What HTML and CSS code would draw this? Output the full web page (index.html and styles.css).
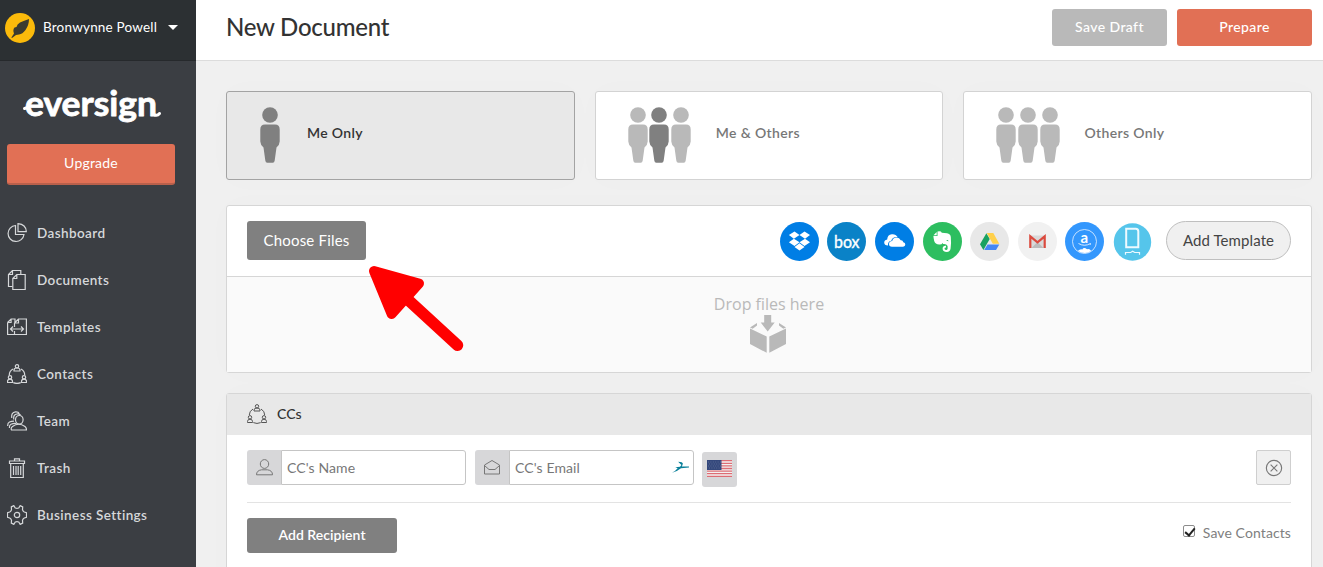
FILE: index.html
```html
<!DOCTYPE html>
<html lang="en">
<head>
  <meta charset="UTF-8">
  <title>New Document - eversign</title>
  <meta name="viewport" content="width=device-width, initial-scale=1.0">
  <link rel="stylesheet" href="styles.css">
</head>
<body>
  <svg class="defs" width="0" height="0">
    <symbol id="person" viewBox="0 0 20 56">
      <circle cx="10" cy="8" r="7.8"/>
      <path d="M5 17.6h10q4.7 0 4.7 5v12q0 3-3.2 6l-1.800 13q-.3 2.200-2 2.200H7.300q-1.700 0-2-2.200l-1.800-13q-3.200-3-3.200-6v-12q0-5 4.700-5z"/>
    </symbol>
    <symbol id="contacts" viewBox="0 0 20 20">
      <circle cx="10" cy="2.300" r="1.700"/>
      <path d="M7 7V6q0-2 3-2t3 2v1z"/>
      <circle cx="3" cy="13.300" r="1.700"/>
      <path d="M.5 18.500v-1q0-2.300 2.500-2.300t2.500 2.300v1z"/>
      <circle cx="17" cy="13.300" r="1.700"/>
      <path d="M14.500 18.500v-1q0-2.300 2.500-2.300t2.500 2.300v1z"/>
      <path d="M6 5Q2.300 7 2.300 11M14 5q3.700 2 3.700 6M6.300 18.600q3.700 1.700 7.400 0"/>
    </symbol>
  </svg>

  <aside class="sidebar">
    <div class="user">
      <svg class="avatar" viewBox="0 0 30 30">
        <circle cx="15" cy="15" r="15" fill="#fbba0b"/>
        <path d="M24 6q0 6-3.500 11-3 4-6.500 4.500l-3 .5L7 25l-.6-.6L9 20.500Q7.500 17 9.500 14.500l2-.5Q12 11 15 9.500 19 7.500 24 6z" fill="#3b3b30"/>
      </svg>
      <span class="user-name">Bronwynne Powell</span>
      <span class="caret"></span>
    </div>

    <svg class="logo" viewBox="0 0 140 54">
      <text x="3" y="35" textLength="132" lengthAdjust="spacingAndGlyphs">eversign</text>
      <path d="M2.500 27.500L6 26.500M133 34q2.500 1 4.500-1.500"/>
    </svg>
    <a class="upgrade">Upgrade</a>

    <nav class="nav">
      <a class="nav-item">
        <svg viewBox="0 0 20 20"><path d="M8.500 2.500a8 8 0 1 0 8.500 9H8.500z"/><path d="M11 .6v8h8.300Q19 1.200 11 .6z"/></svg>
        Dashboard
      </a>
      <a class="nav-item">
        <svg viewBox="0 0 20 20"><path d="M5.500 16.500h-4v-12l4-4h8.300v3.700M1.500 4.500h4v-4"/><path d="M5.800 8.500l4-4h8.400v15H5.800zM5.800 8.500h4v-4"/></svg>
        Documents
      </a>
      <a class="nav-item">
        <svg viewBox="0 0 20 20"><path d="M.6 5.500l3.500-3.500H8v3M.6 5.500h3.500V2M.6 5.500v12h18.800V2h-8L7.500 6v4M7.500 6h4V2M7.500 14v3.500"/><path d="M3.500 12h13M6 9.500L3.500 12 6 14.500M14 9.500l2.500 2.500-2.500 2.500"/></svg>
        Templates
      </a>
      <a class="nav-item">
        <svg viewBox="0 0 20 20"><use href="#contacts"/></svg>
        Contacts
      </a>
      <a class="nav-item">
        <svg viewBox="0 0 20 20"><ellipse cx="12.300" cy="8.800" rx="3.800" ry="4.300"/><path d="M4.500 19q-1-2 1-3.500 6-4.500 12.500 0 1.500 1 1.500 3.500z"/><path d="M6.800 8.500Q6 3.500 10 3q2.500-.2 3.500 1.200M4.800 7Q4 1.300 8.500.8q3-.2 3.700 1.800M2.500 17Q2 14.500 4 13.300q3-1.500 5.500-.8M.7 15Q.5 12 2.500 11q2-.9 4.500-.9"/></svg>
        Team
      </a>
      <a class="nav-item">
        <svg viewBox="0 0 20 20"><path d="M2.500 5.500V3h15v2.500zM3.700 5.500v14h12.600v-14M7.500 3V.8h5V3M6.500 8v9M9 8v9M11.200 8v9M13.700 8v9"/></svg>
        Trash
      </a>
      <a class="nav-item">
        <svg viewBox="0 0 20 20"><circle cx="10" cy="10" r="2.700"/><path d="M4.300 1.900L6.800.6l1.500 2.400q1.700.7 3.400 0l1.500-2.400 2.500 1.300-.2 2.800q.5 1.500 1.800 2.300l2.200.8v4.400l-2.200.8q-1.300.8-1.800 2.300l.2 2.800-2.500 1.300-1.500-2.400q-1.700-.7-3.400 0l-1.500 2.400-2.500-1.300.2-2.800Q4 13.800 2.700 13L.5 12.200V7.800L2.700 7Q4 6.200 4.500 4.700z"/></svg>
        Business Settings
      </a>
    </nav>
  </aside>

  <main class="main">
    <header class="topbar">
      <h1>New Document</h1>
      <button class="btn btn-draft">Save Draft</button>
      <button class="btn btn-prepare">Prepare</button>
    </header>

    <div class="content">
      <div class="signers">
        <div class="signer active">
          <div class="people"><svg class="dark"><use href="#person"/></svg></div>
          <span>Me Only</span>
        </div>
        <div class="signer">
          <div class="people"><svg><use href="#person"/></svg><svg class="dark"><use href="#person"/></svg><svg><use href="#person"/></svg></div>
          <span>Me &amp; Others</span>
        </div>
        <div class="signer">
          <div class="people"><svg><use href="#person"/></svg><svg><use href="#person"/></svg><svg><use href="#person"/></svg></div>
          <span>Others Only</span>
        </div>
      </div>

      <section class="panel files">
        <div class="files-bar">
          <button class="btn btn-choose">Choose Files</button>
          <div class="sources">
            <svg viewBox="0 0 39 39">
              <circle cx="19.500" cy="19.500" r="19.500" fill="#007ee5"/>
              <path fill="#fff" d="M14.500 9.500l5 3.600-5.600 3.600-5-3.600zM24.500 9.500l5.500 3.600-5 3.600-5.500-3.600zM8.900 20.300l5-3.600 5.600 3.600-5 3.700zM19.500 20.300l5.500-3.600 5 3.600-5.500 3.700zM14.500 24.900l5-3.700 5 3.700-5 3.500z"/>
            </svg>
            <svg viewBox="0 0 39 39">
              <circle cx="19.500" cy="19.500" r="19.500" fill="#0a82c7"/>
              <text class="box-text" x="7" y="25.500" textLength="25.500" lengthAdjust="spacingAndGlyphs">box</text>
            </svg>
            <svg viewBox="0 0 39 39">
              <circle cx="19.500" cy="19.500" r="19.500" fill="#007ee5"/>
              <path fill="#fff" d="M13 23.500q-3.800 0-3.800-3 0-2.600 3-3.100.2-4.600 4.600-5.200 4-.4 5.900 3-5.200-.6-6.400 3.500-3.700.8-3.300 4.800z"/>
              <path fill="#fff" d="M17 24.800q-3-.2-3-2.800 0-2.600 3.200-2.900.7-3.600 4.300-3.600 3 0 4.200 2.800 2.200-.2 2.600 2 2 .2 2 2.200t-2.200 2.300z"/>
            </svg>
            <svg viewBox="0 0 39 39">
              <circle cx="19.500" cy="19.500" r="19.500" fill="#2dbe60"/>
              <path fill="#fff" d="M14.500 9.500q3.500-.8 4.300 1.200l5.200.6q3.500.5 3.800 3.800.6 6-.2 11.500-.5 3.400-3.800 3.400-4.300-.2-4.200-3.500.2-3 3.400-2.700v1.700q-1.500 0-1.500 1.200 0 1.300 2.300 1.300 1.200-.6.800-4-1-1.700-3.500-1.900-1 0-1.600-1.200-.6 1.700-3.300 1.500-4-.3-5-3.500-.7-2.300-.8-4.800h4.100z"/>
              <path fill="#fff" d="M10.500 13.200l3.200-3.200v3.200z"/>
              <path fill="#2dbe60" d="M23.200 18.800q1.500-1.600 2.400.5z"/>
            </svg>
            <svg viewBox="0 0 39 39">
              <circle cx="19.500" cy="19.500" r="19.500" fill="#e8e8e8"/>
              <path fill="#18a160" d="M16.400 11.200l3.300 5.800-6.300 11-3.400-5.800z"/>
              <path fill="#ffd04b" d="M16.800 11h6.500l6 10.700h-6.500z"/>
              <path fill="#4587f4" d="M17.500 22.500h11.800L26 28H14.200z"/>
            </svg>
            <svg viewBox="0 0 39 39">
              <circle cx="19.500" cy="19.500" r="19.500" fill="#f1f1f1"/>
              <path fill="#d9d9d9" d="M12 13.500h15V26H12z"/>
              <path fill="#bbb" d="M19.500 20l6 6H13.500z"/>
              <path fill="none" stroke="#db4a3e" stroke-width="2.200" d="M12.300 26V14.300l7.200 6 7.200-6V26"/>
            </svg>
            <svg viewBox="0 0 39 39">
              <circle cx="19.500" cy="19.500" r="19.500" fill="#3397fd"/>
              <circle cx="19.500" cy="19.500" r="12" fill="none" stroke="#e8f3ff" stroke-width=".8"/>
              <text class="amazon-text" x="15.500" y="21">a</text>
              <path fill="none" stroke="#fff" stroke-width=".8" d="M13.500 21.500q6 3.500 12 0l-.3 1.400"/>
              <path fill="#fff" d="M12.800 29q2.500-2.500 4.500-1.500 1-2 3.300-1.200 1.200 1 2.300.8 2-.3 3.200 1.900-6 4.200-13.300 0z"/>
            </svg>
            <svg viewBox="0 0 39 39">
              <circle cx="19.500" cy="20" r="18.700" fill="#55c5eb"/>
              <path fill="none" stroke="#eefaff" stroke-width="2" d="M13.200 6.700h9.500q2.600 0 2.600 2.600v15.900H13.200z"/>
              <path fill="none" stroke="#eefaff" stroke-width="1.200" d="M12.500 32.800v-2.300h5.200l2-1.200 2 1.200h4.800v2.300"/>
            </svg>
          </div>
          <button class="btn-template">Add Template</button>
        </div>
        <div class="drop">
          <span>Drop files here</span>
          <svg viewBox="0 0 36 38">
            <path d="M14.200 0h7v7.500h3.500l-7 9-7-9h3.500zM0 13.500l16.700 8v16.300L0 29zM36 13.500l-16.700 8v16.300L36 29zM0 12.500L7 8v2.500L2.700 13.800zM36 12.500L29 8v2.500l4.300 3.300z"/>
          </svg>
        </div>
        <svg class="pointer" viewBox="0 0 100 95">
          <path class="head" d="M9 9l45 12.500L26.700 52z"/>
          <path class="shaft" d="M40 35l52.500 48.300"/>
        </svg>
      </section>

      <section class="panel ccs">
        <div class="ccs-head">
          <svg viewBox="0 0 20 20"><use href="#contacts"/></svg>
          <span>CCs</span>
        </div>
        <div class="ccs-body">
          <div class="cc-row">
            <label class="field">
              <span class="addon"><svg viewBox="0 0 18 18"><ellipse cx="9.500" cy="5" rx="4.200" ry="4.400"/><path d="M1.500 15.800q0-4.300 5-5h6q5 .7 5 5z"/></svg></span>
              <input type="text" placeholder="CC's Name">
            </label>
            <label class="field field-email">
              <span class="addon"><svg viewBox="0 0 18 18"><path d="M1.500 6L9 1.500 16.500 6v9h-15zM1.500 6.500L6 10.500h6l4.500-4"/></svg></span>
              <input type="text" placeholder="CC's Email">
              <svg class="bird" viewBox="0 0 18 12"><path d="M0 12q3.500-1.500 6-4.700L3.500 6.200l5-.4 1.500-2L6.500.5q5 .3 5 2l-1 3 7.500.1v.9l-8.500.8Q6 10.500 0 12z"/></svg>
            </label>
            <button class="flag">
              <svg viewBox="0 0 25 17">
                <path fill="#f2f2f2" d="M0 0h25v17H0z"/>
                <path stroke="#dd6d75" stroke-width="1.300" d="M0 .7h25M0 3.300h25M0 5.900h25M0 8.500h25M0 11.100h25M0 13.700h25M0 16.300h25"/>
                <path fill="#34487c" d="M0 0h14.500v10H0z"/>
                <path stroke="#66759c" stroke-width=".8" stroke-dasharray="1 1.400" d="M1 2h13M2 4h12M1 6h13M2 8h12"/>
              </svg>
            </button>
            <button class="remove">
              <svg viewBox="0 0 16 16"><circle cx="8" cy="8" r="6.800"/><path d="M5 5l6 6M11 5l-6 6"/></svg>
            </button>
          </div>
          <div class="cc-foot">
            <button class="btn btn-add">Add Recipient</button>
            <label class="save"><input type="checkbox" checked><span>Save Contacts</span></label>
          </div>
        </div>
      </section>
    </div>
  </main>
</body>
</html>
```
FILE: styles.css
```css
* { box-sizing: border-box; }
body { margin: 0; height: 567px; display: flex; overflow: hidden; background: #f0f0f0; color: #333; font-family: Lato, "Liberation Sans", sans-serif; font-size: 14px; }
button, input { font-family: inherit; }
button { border: none; padding: 0; }
.defs { position: absolute; }

/* sidebar */
.sidebar { width: 196px; height: 567px; flex: none; background: #3b3e43; color: #fff; }
.user { height: 61px; padding: 0 0 5px 5px; display: flex; align-items: center; background: #2c3033; border-bottom: 1px solid #26292c; }
.avatar { width: 30px; height: 30px; }
.user-name { margin-left: 8px; width: 114px; padding-bottom: 1px; font-size: 13.500px; letter-spacing: .2px; white-space: nowrap; }
.caret { margin-left: 11px; border: 5px solid transparent; border-top-color: #fff; border-bottom: 0; }
.logo { display: block; width: 140px; height: 54px; margin: 20px 0 9px 22px; overflow: visible; }
.logo text { font-size: 34px; font-weight: 700; fill: #fff; stroke: #fff; stroke-width: .8; stroke-linejoin: round; }
.logo path { fill: none; stroke: #fff; stroke-width: 3; stroke-linecap: round; }
.upgrade { display: block; width: 168px; height: 41px; margin-left: 7px; border-radius: 3px; border-bottom: 2px solid #b9604b; background: #e17055; font-size: 14px; letter-spacing: .2px; line-height: 38px; text-align: center; }
.nav { margin-top: 24px; }
.nav-item { height: 47px; padding-left: 7px; display: flex; align-items: center; gap: 10px; color: #d6d8da; font-size: 13.500px; font-weight: 600; letter-spacing: .4px; }
.nav-item svg { width: 20px; height: 20px; margin-left: -.5px; margin-right: .5px; fill: none; stroke: #d6d8da; stroke-width: 1.200; }

/* top bar */
.main { flex: 1; min-width: 0; }
.topbar { height: 61px; padding: 9px 11px 0 30px; display: flex; align-items: flex-start; gap: 10px; background: #fff; border-bottom: 1px solid #dcdcdc; }
h1 { flex: 1; margin: 0; font-size: 24px; font-weight: 500; letter-spacing: -.25px; line-height: 36px; }
.btn { border-radius: 3px; color: #fff; background: #808080; font-size: 14px; letter-spacing: .2px; }
.btn-draft, .btn-prepare { height: 37px; padding-bottom: 2px; font-weight: 500; letter-spacing: .4px; }
.btn-draft { width: 115px; background: #b9b9b9; }
.btn-prepare { width: 135px; background: #e17055; }

.content { padding: 30px 11px 0 30px; }
.signers { display: grid; grid-template-columns: repeat(3, 1fr); gap: 20px; }
.signer { height: 89px; padding: 0 0 2px 32px; display: flex; align-items: center; background: #fff; border: 1px solid #d3d3d3; border-radius: 3px; color: #777; font-weight: 600; letter-spacing: .35px; box-shadow: 0 0 30px rgba(0,0,0,.015); }
.signer.active { background: #e8e8e8; border-color: #a3a3a3; color: #333; }
.signer span { padding-bottom: 4px; }
.people { display: flex; gap: 1.600px; margin-right: 25px; }
.active .people { margin: 0 27px 0 1px; }
.people svg { width: 20px; height: 56px; fill: #b9b9b9; }
.people .dark { fill: #808080; }

.panel { position: relative; background: #fff; border: 1px solid #d6d6d6; border-radius: 3px; box-shadow: 0 0 30px rgba(0,0,0,.015); }
.files { margin-top: 25px; height: 168px; }
.files-bar { height: 71px; padding: 0 20px; display: flex; align-items: center; border-bottom: 1px solid #d6d6d6; }
.btn-choose { width: 119px; height: 39px; margin-bottom: 2px; font-size: 15px; }
.sources { margin-left: auto; display: flex; gap: 8.600px; }
.sources svg { width: 39px; height: 39px; }
.box-text { font-size: 17px; font-weight: 400; fill: #fff; stroke: #fff; stroke-width: .4; }
.amazon-text { font-size: 15px; font-weight: 700; fill: #fff; }
.btn-template { width: 125px; height: 39px; margin: 0 0 2px 14px; border: 1px solid #bfbfbf; border-radius: 20px; background: #f0f0f0; color: #444; font-size: 15px; letter-spacing: .1px; }
.drop { height: 95px; padding-top: 16px; display: flex; flex-direction: column; align-items: center; background: #fafafa; color: #b9b9b9; font: 16px/22px "Open Sans", sans-serif; }
.drop svg { width: 36px; height: 38px; fill: #b9b9b9; margin: 0 3px 0 0; }
.pointer { position: absolute; left: 138px; top: 56px; width: 100px; height: 95px; fill: #f00; stroke: #f00; stroke-linejoin: round; stroke-linecap: round; }
.head { stroke-width: 10; }
.shaft { stroke-width: 11.500; }

/* CCs */
.ccs { margin-top: 20px; height: 200px; }
.ccs-head { height: 41px; padding-left: 20px; display: flex; align-items: center; gap: 10px; background: #e8e8e8; font-size: 14px; font-weight: 500; }
.ccs-head span { padding-bottom: 2px; }
.ccs-head svg { width: 20px; height: 20px; margin-bottom: 1px; fill: none; stroke: #555; stroke-width: 1; }
.ccs-body { padding: 15px 20px; }
.cc-row { height: 53px; display: flex; align-items: flex-start; border-bottom: 1px solid #e3e3e3; }
.field { position: relative; width: 219px; height: 35px; margin-right: 9px; display: flex; }
.field-email { margin-right: 8px; }
.addon { width: 34px; display: flex; align-items: center; justify-content: center; background: #d7d7d9; border-radius: 3px 0 0 3px; }
.addon svg, .remove svg { width: 18px; height: 18px; fill: none; stroke: #777; stroke-width: 1; }
.field input { width: 185px; padding: 0 5px; border: 1px solid #c5c5c5; border-radius: 0 3px 3px 0; font-size: 14px; letter-spacing: .1px; }
.field input::placeholder { color: #777; }
.bird { position: absolute; right: 5px; top: 11px; width: 17px; height: 12px; fill: #0b809a; }
.flag { width: 35px; height: 35px; margin-top: 2px; border-radius: 3px; background: #d7d7d9; display: flex; align-items: center; justify-content: center; padding-bottom: 3px; }
.flag svg { width: 25px; height: 17px; }
.remove { width: 35px; height: 35px; margin-left: auto; display: flex; align-items: center; justify-content: center; border: 1px solid #cfcfcf; border-radius: 2px; background: #f0f0f0; }
.cc-foot { padding-top: 15px; display: flex; justify-content: space-between; }
.btn-add { width: 150px; height: 35px; padding-bottom: 2px; font-weight: 600; font-size: 14px; letter-spacing: .05px; }
.save { display: flex; align-items: flex-start; color: #808080; font-size: 14px; letter-spacing: .1px; line-height: 17px; padding-top: 6px; }
.save input { appearance: none; width: 12px; height: 12px; margin: 1px 8px 0 0; border: 1px solid #8c8c8c; border-radius: 2px; background: #fff; }
.save input:checked::after { content: ""; display: block; width: 4px; height: 8px; margin: 0 0 0 3px; border: solid #222; border-width: 0 2px 2px 0; transform: rotate(40deg); }
```
